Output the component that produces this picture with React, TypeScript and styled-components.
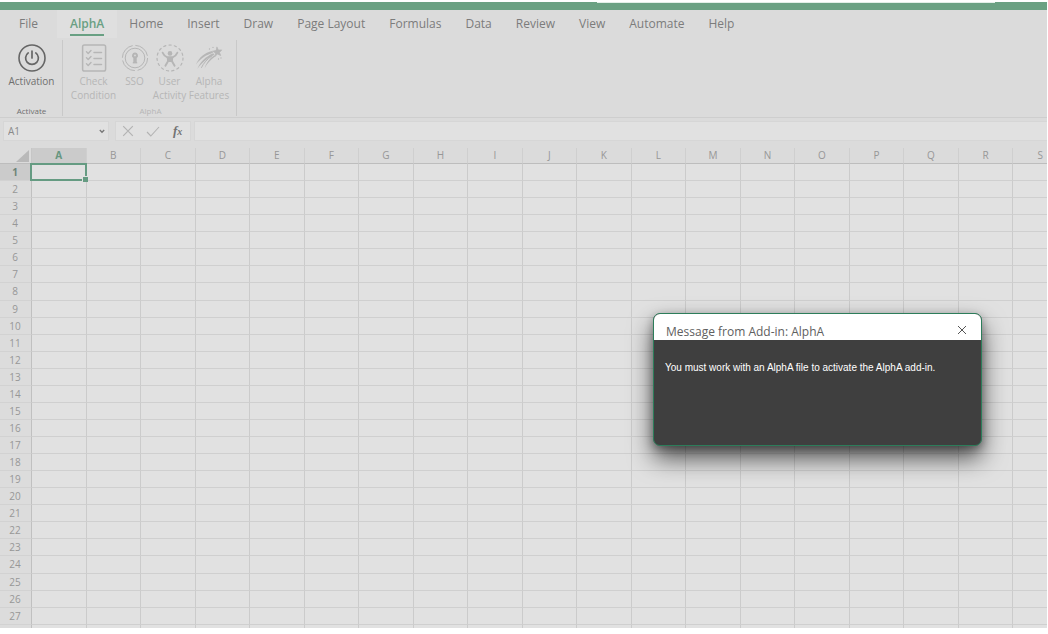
import React from 'react';
import styled, { createGlobalStyle } from 'styled-components';

const GlobalStyle = createGlobalStyle`
  * { box-sizing: border-box; }
  body {
    margin: 0;
    background: #fff;
    font-family: "Open Sans", "Noto Sans", sans-serif;
    overflow: hidden;
  }
  button, input { font-family: inherit; }
`;

const Workbook = styled.div`
  display: flex;
  flex-direction: column;
  height: calc(100vh - 6px);
  margin-right: 1px;
  padding-top: 2px;
  background: linear-gradient(#fff 2px, #dbdbdb 2px);
  position: relative;
  overflow: hidden;
`;

const TitleStrip = styled.div`
  flex: none;
  display: flex;
  justify-content: flex-end;
  height: 8px;
  padding-right: 52px;
  background: #6ba183;
`;

const SearchEdge = styled.div`
  width: 40%;
  height: 1px;
  background: #e3efe8;
`;

const Tabs = styled.nav`
  flex: none;
  display: flex;
  height: 28px;
  padding-left: 7px;
`;

const Tab = styled.button<{ $active?: boolean }>`
  display: flex;
  align-items: center;
  border: 0;
  margin: 0 0 0 ${p => (p.$active ? 7 : 0)}px;
  padding: 0 ${p => (p.$active ? 13 : 12)}px;
  height: 28px;
  font-size: 12px;
  line-height: 16px;
  white-space: nowrap;
  color: ${p => (p.$active ? '#69a083' : '#7c7c7c')};
  font-weight: ${p => (p.$active ? 600 : 400)};
  background: ${p => (p.$active ? '#dfdfdf' : 'transparent')};
  span {
    padding: 4px 0 2px;
    border-bottom: 2px solid ${p => (p.$active ? '#69a083' : 'transparent')};
  }
`;

const Ribbon = styled.div`
  flex: none;
  display: flex;
  height: 80px;
  padding: 2px 0 1px;
  border-bottom: 1px solid #cecece;
`;

const Group = styled.section<{ $muted?: boolean }>`
  display: flex;
  flex-direction: column;
  justify-content: space-between;
  padding: 0 5px 0 ${p => (p.$muted ? 7 : 6)}px;
  border-right: 1px solid #c9c9c9;
  color: ${p => (p.$muted ? '#b6b6b6' : '#6f6f6f')};
`;

const Commands = styled.div`
  display: flex;
`;

const Command = styled.button<{ $width: number }>`
  display: flex;
  flex-direction: column;
  align-items: center;
  width: ${p => p.$width}px;
  padding: 4px 0 0;
  border: 0;
  background: none;
  color: inherit;
  font-size: 10px;
  line-height: 14px;
  svg { display: block; margin-bottom: 2px; flex: none; }
  span { white-space: pre; }
`;

const GroupName = styled.div`
  text-align: center;
  font-size: 8px;
  line-height: 10px;
`;

const FormulaRow = styled.div`
  flex: none;
  display: flex;
  gap: 6px;
  height: 30px;
  padding: 3px 0 7px 3px;
`;

const NameBox = styled.label`
  display: flex;
  align-items: center;
  width: 106px;
  padding: 0 3px 0 4px;
  border: 1px solid #d6d6d6;
  background: #e1e1e1;
  color: #8a8a8a;
  input {
    flex: 1;
    min-width: 0;
    padding: 0;
    border: 0;
    background: none;
    color: inherit;
    font-size: 10px;
  }
`;

const FormulaTools = styled.div`
  display: flex;
  align-items: center;
  width: 76px;
  border: 1px solid #d6d6d6;
  background: #e1e1e1;
`;

const Tool = styled.button`
  display: grid;
  place-items: center;
  flex: 1;
  height: 16px;
  padding: 0;
  border: 0;
  background: none;
  color: #b3b3b3;
`;

const Fx = styled.span`
  font: italic 700 13px/16px "Liberation Serif", serif;
  color: #737373;
  small { font-size: 10px; }
`;

const FormulaInput = styled.input`
  flex: 1;
  min-width: 0;
  margin-left: -3px;
  border: 1px solid #d6d6d6;
  border-right: 0;
  background: #e1e1e1;
`;

const SheetArea = styled.main`
  flex: 1;
  min-height: 0;
  overflow: hidden;
`;

const Sheet = styled.table`
  table-layout: fixed;
  width: calc(100% + 21px);
  height: 494px;
  border-collapse: separate;
  border-spacing: 0;
  background: #e1e1e1;
  color: #979797;
  font-size: 10px;
  line-height: 14px;
`;

const Corner = styled.td`
  width: 32px;
  height: 16px;
  padding: 0;
  background: #dbdbdb;
  border-right: 1px solid #c6c6c6;
  border-bottom: 1px solid #bdbdbd;
  svg { display: block; margin-left: auto; margin-right: 2px; }
`;

const ColHead = styled.th<{ $active: boolean }>`
  height: 16px;
  padding: 0;
  vertical-align: top;
  font-weight: ${p => (p.$active ? 700 : 400)};
  color: ${p => (p.$active ? '#669680' : '#979797')};
  background: ${p => (p.$active ? '#cbcbcb' : '#dbdbdb')};
  border-right: 1px solid #cfcfcf;
  border-bottom: 1px solid #bdbdbd;
`;

const RowHead = styled.th<{ $active: boolean }>`
  height: 17px;
  padding: 0 1px 0 0;
  font-weight: ${p => (p.$active ? 700 : 400)};
  color: ${p => (p.$active ? '#6d8378' : '#979797')};
  background: ${p => (p.$active ? '#cbcbcb' : '#dcdcdc')};
  border-right: 1px solid #c0c0c0;
  border-bottom: 1px solid #d2d2d2;
`;

const Cell = styled.td`
  position: relative;
  padding: 0;
  border-right: 1px solid #cbcbcb;
  border-bottom: 1px solid #cfcfcf;
`;

const Selection = styled.div`
  position: absolute;
  z-index: 1;
  inset: -1px -1px -1px -2px;
  border: 2px solid #659b82;
  &::after {
    content: '';
    position: absolute;
    right: -3px;
    bottom: -3px;
    width: 5px;
    height: 5px;
    border: solid #e1e1e1;
    border-width: 1px 0 0 1px;
    background: #659b82;
  }
`;

const Dialog = styled.dialog`
  position: absolute;
  z-index: 2;
  inset: 313px 65px auto auto;
  display: flex;
  flex-direction: column;
  width: 329px;
  height: 133px;
  margin: 0;
  padding: 0;
  border: 1px solid #2c7d5a;
  border-radius: 7px;
  overflow: hidden;
  background: #3f3f3f;
  box-shadow: 0 12px 24px rgba(0, 0, 0, 0.65), 0 3px 8px rgba(0, 0, 0, 0.3);
`;

const DialogHeader = styled.header`
  display: flex;
  justify-content: space-between;
  height: 26px;
  padding: 0 14px 0 12px;
  background: #fff;
`;

const DialogTitle = styled.h2`
  margin: 0;
  padding-top: 9px;
  font-size: 12px;
  line-height: 17px;
  font-weight: 400;
  white-space: nowrap;
  color: #606060;
`;

const CloseButton = styled.button`
  display: grid;
  place-items: center;
  width: 10px;
  height: 32px;
  padding: 0;
  border: 0;
  background: none;
  color: #555;
`;

const DialogText = styled.p`
  margin: 0;
  padding: 21px 11px;
  font-family: "Liberation Sans", Arial, sans-serif;
  font-size: 10px;
  line-height: 14px;
  white-space: nowrap;
  color: #fff;
`;

const PowerIcon = () => (
  <svg width="28" height="28" viewBox="0 0 28 28" fill="none" stroke="#666" strokeLinecap="round">
    <circle cx="14" cy="14" r="13" strokeWidth="1.6" />
    <path d="M10.2 8.9a6.4 6.4 0 1 0 7.6 0" strokeWidth="1.7" />
    <path d="M14 7v7" strokeWidth="1.7" />
  </svg>
);

const ChecklistIcon = () => (
  <svg width="28" height="28" viewBox="0 0 28 28" fill="none" stroke="currentColor" strokeLinecap="round" strokeLinejoin="round">
    <rect x="2.6" y="1" width="23" height="26" rx="1.8" strokeWidth="1.5" />
    <path d="M6.5 7.8l1.7 1.6L11 6.5M6.5 13.8l1.7 1.6 2.8-2.9M6.5 19.8l1.7 1.6 2.8-2.9" strokeWidth="1.4" />
    <path d="M14 8.4h7.5M14 14.4h7.5M14 20.4h7.5" strokeWidth="1.5" />
  </svg>
);

const KeyholeIcon = () => (
  <svg width="28" height="28" viewBox="0 0 28 28" fill="none" stroke="currentColor">
    <circle cx="14" cy="14" r="12.6" strokeWidth="1" strokeDasharray="17 2.8" />
    <circle cx="14" cy="14" r="9.8" strokeWidth="1" />
    <path d="M14 8.6a3 3 0 0 0-1.7 5.500V19h3.400V14.100a3 3 0 0 0-1.700-5.500z" fill="currentColor" stroke="none" />
    <path d="M11.800 18h4.400v1.400h-4.400z" fill="currentColor" stroke="none" />
    <circle cx="14" cy="11.400" r=".9" fill="#dbdbdb" stroke="none" />
  </svg>
);

const PersonIcon = () => (
  <svg width="28" height="28" viewBox="0 0 28 28" fill="none" stroke="currentColor" strokeLinecap="round" strokeLinejoin="round">
    <circle cx="14" cy="14" r="13" strokeWidth="1.2" strokeDasharray="2.2 3.24" />
    <circle cx="14" cy="9.4" r="2.3" fill="currentColor" stroke="none" />
    <path d="M6.600 8.600c1 2.400 2.600 4 4.800 4.800h5.200c2.200-.8 3.800-2.400 4.800-4.800" strokeWidth="1.800" />
    <path d="M11.400 13.200h5.200l-.3 4.300h-4.600z" fill="currentColor" strokeWidth="1.200" />
    <path d="M12 17.300l-2.600 4.500M16 17.300l2.600 4.500" strokeWidth="1.900" />
  </svg>
);

const CometIcon = () => (
  <svg width="28" height="28" viewBox="0 0 28 28" fill="currentColor" stroke="currentColor" strokeLinecap="round">
    <path d="M22 3.200l1.400 2.900 3.400-.2-2.300 2.500 1.200 3.200-3.100-1.500-2.600 2.200.5-3.400-2.900-1.700 3.300-.7z" strokeWidth=".7" strokeLinejoin="round" />
    <path d="M1 20.500C4 13.500 9.500 8.600 17.300 7l.7 1.800C11 11 5.500 14.500 1 20.500z" stroke="none" />
    <path d="M2.300 25C5.200 18 10.500 12.500 18.300 9.200l1 1.600C12.500 14.400 7 18.500 2.300 25z" stroke="none" />
    <path d="M9.500 24.500c1.600-5.700 4.900-10 10-13.200l1 1c-4.700 3-8 6.600-11 12.200z" stroke="none" />
    <path d="M6.500 23.500c2.200-4.600 5.700-8.400 10-11.200" strokeWidth="1" fill="none" />
    <path d="M18 3.300v.1M26 14v.1M23.500 15v.1M14.500 5v.1" strokeWidth="1.300" />
  </svg>
);

const Cross = ({ size }: { size: number }) => (
  <svg width={size} height={size} viewBox="0 0 10 10" fill="none" stroke="currentColor" strokeWidth="1">
    <path d="M1 1l8 8M9 1l-8 8" />
  </svg>
);

const TABS = ['File', 'AlphA', 'Home', 'Insert', 'Draw', 'Page Layout', 'Formulas', 'Data', 'Review', 'View', 'Automate', 'Help'];
const COLUMNS = 'ABCDEFGHIJKLMNOPQRS'.split('');
const LAST_ROW = 27;
// One unnumbered row follows the last numbered one, to carry the grid to the bottom edge.
const ROWS = Array.from({ length: LAST_ROW + 1 }, (_, i) => i + 1);

export default function App() {
  return (
    <>
      <GlobalStyle />
      <Workbook>
        <TitleStrip><SearchEdge /></TitleStrip>
        <Tabs>
          {TABS.map(t => (
            <Tab key={t} $active={t === 'AlphA'}><span>{t}</span></Tab>
          ))}
        </Tabs>
        <Ribbon>
          <Group>
            <Commands>
              <Command $width={51}><PowerIcon /><span>Activation</span></Command>
            </Commands>
            <GroupName>Activate</GroupName>
          </Group>
          <Group $muted>
            <Commands>
              <Command $width={47}><ChecklistIcon /><span>{'Check\nCondition'}</span></Command>
              <Command $width={35}><KeyholeIcon /><span>SSO</span></Command>
              <Command $width={35}><PersonIcon /><span>{'User\nActivity'}</span></Command>
              <Command $width={44}><CometIcon /><span>{'Alpha\nFeatures'}</span></Command>
            </Commands>
            <GroupName>AlphA</GroupName>
          </Group>
        </Ribbon>
        <FormulaRow>
          <NameBox>
            <input aria-label="Name box" defaultValue="A1" />
            <svg width="6" height="5" viewBox="0 0 6 5" fill="none" stroke="#777" strokeWidth="1.3"><path d="M.8 1l2.200 2.300L5.200 1" /></svg>
          </NameBox>
          <FormulaTools>
            <Tool aria-label="Cancel"><Cross size={12} /></Tool>
            <Tool aria-label="Enter">
              <svg width="14" height="11" viewBox="0 0 14 11" fill="none" stroke="currentColor" strokeWidth="1.1"><path d="M1 6l3.800 4L13 1" /></svg>
            </Tool>
            <Tool aria-label="Insert function"><Fx>f<small>x</small></Fx></Tool>
          </FormulaTools>
          <FormulaInput aria-label="Formula bar" />
        </FormulaRow>
        <SheetArea>
          <Sheet>
            <thead>
              <tr>
                <Corner>
                  <svg width="13" height="12" viewBox="0 0 13 12" fill="#b9b9b9"><path d="M13 0v12H0z" /></svg>
                </Corner>
                {COLUMNS.map(c => <ColHead key={c} scope="col" $active={c === 'A'}>{c}</ColHead>)}
              </tr>
            </thead>
            <tbody>
              {ROWS.map(r => (
                <tr key={r}>
                  <RowHead scope="row" $active={r === 1}>{r <= LAST_ROW ? r : null}</RowHead>
                  {COLUMNS.map(c => (
                    <Cell key={c}>{r === 1 && c === 'A' && <Selection />}</Cell>
                  ))}
                </tr>
              ))}
            </tbody>
          </Sheet>
        </SheetArea>
        <Dialog open aria-labelledby="message-title">
          <DialogHeader>
            <DialogTitle id="message-title">Message from Add-in: AlphA</DialogTitle>
            <CloseButton aria-label="Close"><Cross size={10} /></CloseButton>
          </DialogHeader>
          <DialogText>You must work with an AlphA file to activate the AlphA add-in.</DialogText>
        </Dialog>
      </Workbook>
    </>
  );
}
